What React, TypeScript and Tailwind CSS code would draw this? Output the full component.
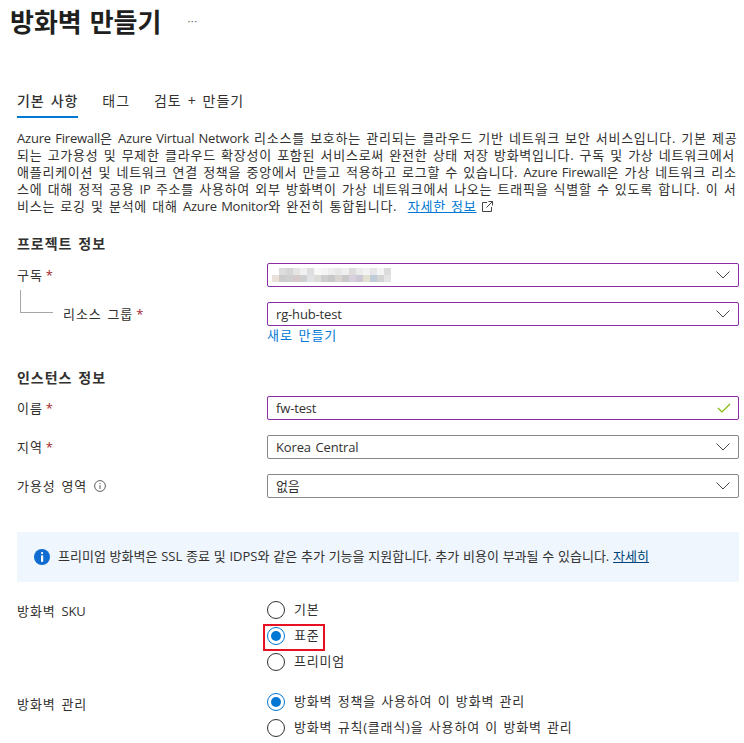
import React from "react";

const Chevron = () => (
  <svg width="16" height="16" viewBox="0 0 16 16" fill="none" className="shrink-0">
    <path d="M1.5 4.5 L8 11 L14.5 4.5" stroke="#444" strokeWidth="1" />
  </svg>
);
const Star = () => <span className="text-[#a4262c] ml-[3px] tracking-normal">*</span>;
const L = ({ children }: { children: React.ReactNode }) => <span className="tracking-[-0.2px]">{children}</span>;

const row1 = ["#ffffff", "#dcdcdc", "#d6d6d6", "#e4e4e4", "#f0f0f0", "#dedede", "#f8f8f8", "#f4f4f4", "#eeeeee", "#e8e8e8", "#f0f0f0", "#dcdcdc", "#ececec", "#f2f2f2", "#e6e6e6", "#f4f4f4", "#dcdcdc", "#ffffff"];
const row2 = ["#e9e0da", "#cccccc", "#cfcfcf", "#d6c9c9", "#cfcfcf", "#dfe3e6", "#dcdcd8", "#cecece", "#c8c8c8", "#d8d4d0", "#c9c9c9", "#d8d0dc", "#ccc8d4", "#e2e0d0", "#c0ccd8", "#d4d4d4", "#e4e4e4", "#ffffff"];

function Blur() {
  return (
    <div className="flex flex-col">
      <div className="flex">{row1.map((c, i) => <span key={i} className="w-[7px] h-[7px]" style={{ backgroundColor: c }} />)}</div>
      <div className="flex">{row2.map((c, i) => <span key={i} className="w-[7px] h-[7px]" style={{ backgroundColor: c }} />)}</div>
    </div>
  );
}

function Field({ value, purple, icon, blur }: { value?: string; purple?: boolean; icon: React.ReactNode; blur?: boolean }) {
  return (
    <div className={`w-[472px] h-[24px] rounded-[2px] border flex items-center justify-between pr-[7px] ${blur ? "pl-[4px]" : "pl-[8px]"} ${purple ? "border-[#8a2da5]" : "border-[#8a8886]"}`}>
      {blur ? <Blur /> : <span className="text-[13px] text-[#323130] tracking-[-0.15px]">{value}</span>}
      {icon}
    </div>
  );
}

function Radio({ checked, label }: { checked?: boolean; label: string }) {
  return (
    <div className="flex items-center gap-[9px] h-[18px]">
      <span className={`w-[18px] h-[18px] rounded-full border flex items-center justify-center ${checked ? "border-[#0078d4]" : "border-[#323130]"}`}>
        {checked && <span className="w-[10px] h-[10px] rounded-full bg-[#0078d4]" />}
      </span>
      <span className="text-[13px] text-[#323130] whitespace-nowrap pb-[2px] tracking-[0.8px] [word-spacing:1.2px]">{label}</span>
    </div>
  );
}

export default function App() {
  return (
    <div className="w-[744px] h-[743px] overflow-hidden bg-white text-[#323130] text-[13px] leading-[17px] tracking-[0.95px] [word-spacing:1.4px] font-['Open_Sans','Noto_Sans_CJK_KR',sans-serif]">
      <div className="flex items-center h-[41px] pl-[10px]">
        <h1 className="text-[26px] leading-[34px] font-semibold tracking-normal [word-spacing:2px] text-[#201f1e] font-['Noto_Sans_CJK_KR',sans-serif]">방화벽 만들기</h1>
        <span className="ml-[26px] text-[#605e5c] text-[11px] tracking-[0.5px]">···</span>
      </div>

      <div className="pl-[17px] pr-[5px] pt-[48px]">
        <div className="flex gap-[24px] text-[14px] h-[29px]">
          <div className="border-b-[2px] border-[#0078d4] h-[29px] pt-[3px] font-medium">기본 사항</div>
          <div className="pt-[3px]">태그</div>
          <div className="pt-[3px]">검토 + 만들기</div>
        </div>

        <p className="mt-[12px] whitespace-nowrap text-[13px] leading-[17px] tracking-[0.75px] [word-spacing:1.1px]">
          <L>Azure Firewall</L>은 <L>Azure Virtual Network</L> 리소스를 보호하는 관리되는 클라우드 기반 네트워크 보안 서비스입니다. 기본 제공<br />
          되는 고가용성 및 무제한 클라우드 확장성이 포함된 서비스로써 완전한 상태 저장 방화벽입니다. 구독 및 가상 네트워크에서<br />
          애플리케이션 및 네트워크 연결 정책을 중앙에서 만들고 적용하고 로그할 수 있습니다. <L>Azure Firewall</L>은 가상 네트워크 리소<br />
          스에 대해 정적 공용 <L>IP</L> 주소를 사용하여 외부 방화벽이 가상 네트워크에서 나오는 트래픽을 식별할 수 있도록 합니다. 이 서<br />
          비스는 로깅 및 분석에 대해 <L>Azure Monitor</L>와 완전히 통합됩니다.&nbsp; <span className="text-[#0078d4] underline">자세한 정보</span>
          <svg className="inline ml-[5px] mb-[2px]" width="11" height="11" viewBox="0 0 11 11" fill="none" stroke="#444" strokeWidth="1">
            <path d="M5 1.5 H.5 V10.5 H9.5 V6 M6.5 .5 H10.5 V4.5 M10.5 .5 L4.5 6.5" />
          </svg>
        </p>

        <h2 className="mt-[20px] font-semibold text-[14px] leading-[18px]">프로젝트 정보</h2>

        <div className="mt-[10px] grid grid-cols-[250px_472px] items-center">
          <div>구독<Star /></div>
          <Field purple blur icon={<Chevron />} />
        </div>
        <div className="mt-[15px] grid grid-cols-[250px_472px] items-center">
          <div className="flex">
            <div className="w-[33px] h-[23px] ml-[3px] -mt-[16px] border-l border-b border-[#a6a6a6]" />
            <div className="ml-[10px]">리소스 그룹<Star /></div>
          </div>
          <Field purple value="rg-hub-test" icon={<Chevron />} />
        </div>
        <div className="ml-[250px] text-[#0078d4] leading-[18px]">새로 만들기</div>

        <h2 className="mt-[25px] font-semibold text-[14px] leading-[18px]">인스턴스 정보</h2>

        <div className="mt-[9px] grid grid-cols-[250px_472px] items-center">
          <div>이름<Star /></div>
          <Field purple value="fw-test" icon={
            <svg width="14" height="12" viewBox="0 0 14 12" fill="none" stroke="#7fba00" strokeWidth="1.1"><path d="M1 6 L5 10 L13 2" /></svg>
          } />
        </div>
        <div className="mt-[15px] grid grid-cols-[250px_472px] items-center">
          <div>지역<Star /></div>
          <Field value="Korea Central" icon={<Chevron />} />
        </div>
        <div className="mt-[15px] grid grid-cols-[250px_472px] items-center">
          <div className="flex items-center">
            가용성 영역
            <svg className="ml-[7px]" width="12" height="12" viewBox="0 0 12 12" fill="none" stroke="#605e5c" strokeWidth="1">
              <circle cx="6" cy="6" r="5.4" /><path d="M6 5 V9 M6 3 V4" />
            </svg>
          </div>
          <Field value="없음" icon={<Chevron />} />
        </div>

        <div className="mt-[34px] w-[722px] h-[50px] bg-[#eff6fe] flex items-center pl-[17px] whitespace-nowrap">
          <svg width="16" height="16" viewBox="0 0 16 16" className="shrink-0">
            <circle cx="8" cy="8" r="8" fill="#0f6cd1" />
            <rect x="7" y="3" width="2.2" height="2.2" rx="1.1" fill="#fff" />
            <rect x="7" y="6.4" width="2.2" height="6.4" fill="#fff" />
          </svg>
          <span className="ml-[8px] pb-[2px] tracking-[0px] [word-spacing:0.4px]">프리미엄 방화벽은 SSL 종료 및 IDPS와 같은 추가 기능을 지원합니다. 추가 비용이 부과될 수 있습니다. <span className="text-[#004578] underline">자세히</span></span>
        </div>

        <div className="mt-[19px] grid grid-cols-[250px_472px]">
          <div className="pt-[2px]">방화벽 <L>SKU</L></div>
          <div className="flex flex-col gap-[8px] relative">
            <Radio label="기본" />
            <Radio checked label="표준" />
            <Radio label="프리미엄" />
            <div className="absolute left-[-4px] top-[23px] w-[62px] h-[27px] border-[2px] border-[#e81123]" />
          </div>
        </div>
        <div className="mt-[22px] grid grid-cols-[250px_472px]">
          <div className="pt-[3px]">방화벽 관리</div>
          <div className="flex flex-col gap-[8px]">
            <Radio checked label="방화벽 정책을 사용하여 이 방화벽 관리" />
            <Radio label="방화벽 규칙(클래식)을 사용하여 이 방화벽 관리" />
          </div>
        </div>
      </div>
    </div>
  );
}
